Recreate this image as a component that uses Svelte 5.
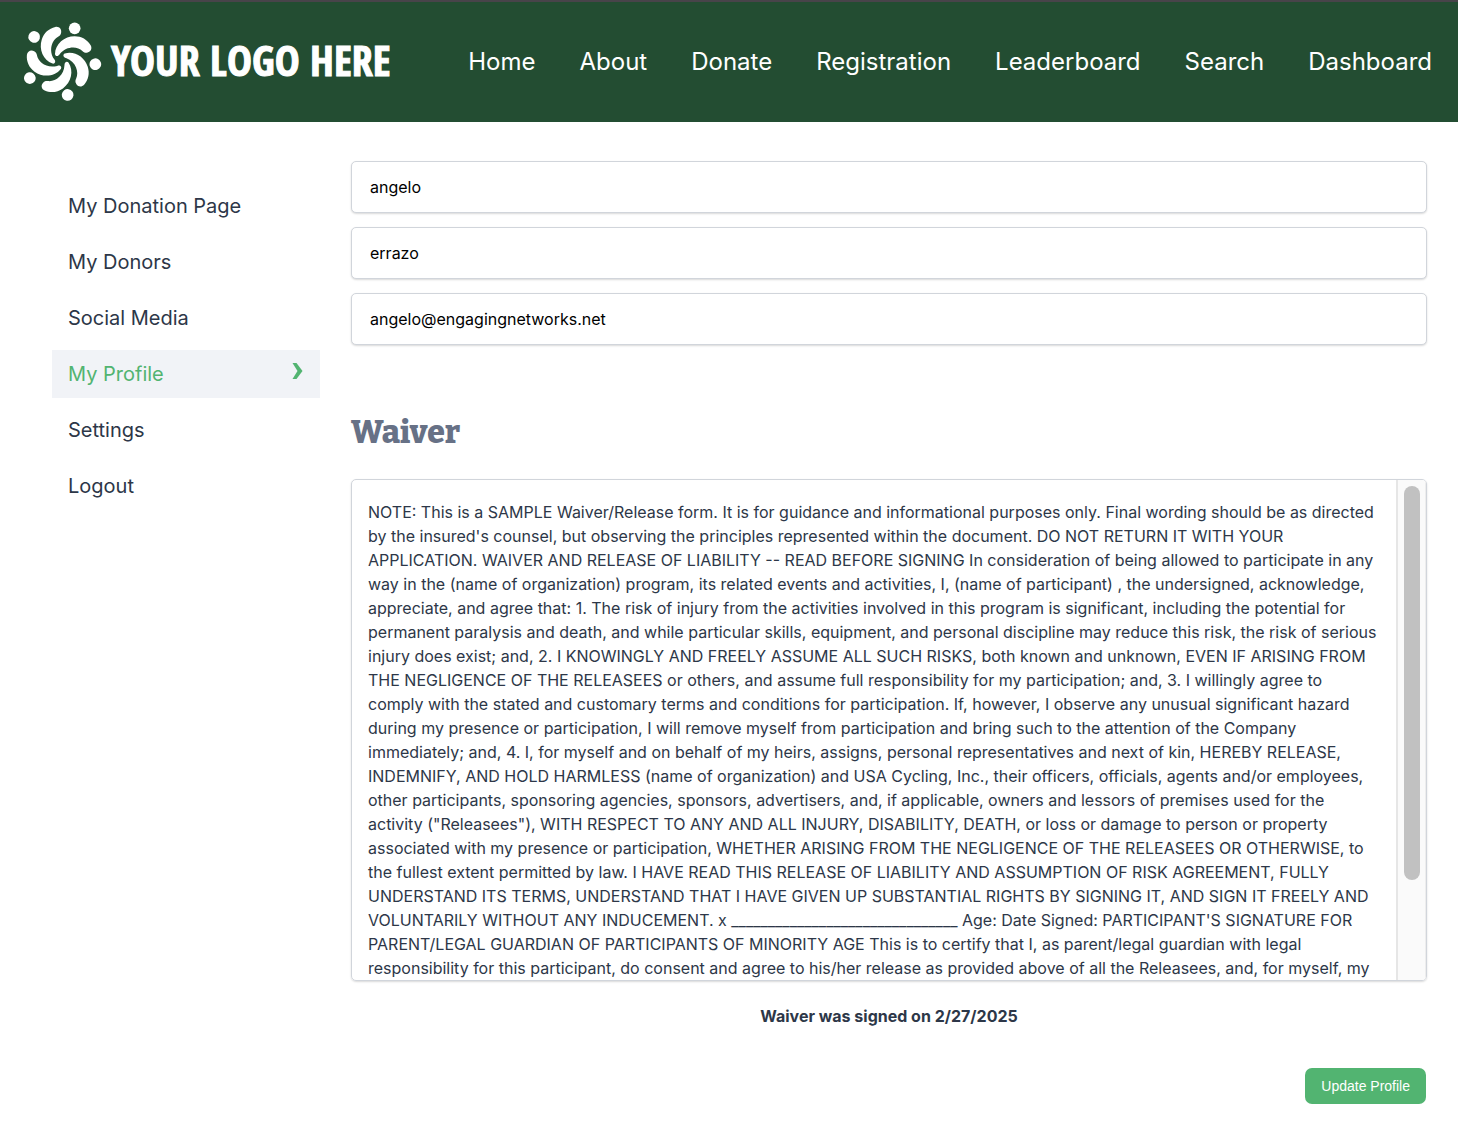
<script>
  const links = ['Home', 'About', 'Donate', 'Registration', 'Leaderboard', 'Search', 'Dashboard'];
  const menu = ['My Donation Page', 'My Donors', 'Social Media', 'My Profile', 'Settings', 'Logout'];
  const active = 'My Profile';
  const angles = [0, 72, 144, 216, 288];

  let firstName = $state('angelo');
  let lastName = $state('errazo');
  let email = $state('angelo@engagingnetworks.net');
</script>

<header>
  <a class="logo" href="#home">
    <svg viewBox="23 24 234 240" width="78" height="80" aria-hidden="true">
      {#each angles as a}
        <g transform="rotate({a} 132 139.5)">
          <circle cx="175" cy="43" r="17.5" />
          <path d="M116 120C117 90 144 67 175 67C195 67 213 77 223 94C229 105 222 115 212 116C206 117 202 115 198 111C184 97 150 95 130 121C125 129 116 127 116 120Z" />
        </g>
      {/each}
    </svg>
    <span>YOUR LOGO HERE</span>
  </a>
  <nav aria-label="Main">
    {#each links as l}
      <a href="#{l.toLowerCase()}">{l}</a>
    {/each}
  </nav>
</header>

<div class="page">
  <nav class="side" aria-label="Account">
    {#each menu as m}
      <a href="#account" class:active={m === active} aria-current={m === active ? 'page' : undefined}>
        {m}
        {#if m === active}
          <svg viewBox="0 0 11 17" width="12" height="17" aria-hidden="true"><path d="M0 0H4L10 8L4 16H0L5 8Z" /></svg>
        {/if}
      </a>
    {/each}
  </nav>

  <main>
    <form onsubmit={(e) => e.preventDefault()}>
      <div class="fields">
        <input type="text" aria-label="First name" bind:value={firstName} />
        <input type="text" aria-label="Last name" bind:value={lastName} />
        <input type="email" aria-label="Email" bind:value={email} />
      </div>

      <h2>Waiver</h2>
      <div class="waiver">
        <p class="terms">
          NOTE: This is a SAMPLE Waiver/Release form. It is for guidance and informational purposes only. Final wording should be as directed by the insured's counsel, but observing the principles represented within the document. DO NOT RETURN IT WITH YOUR APPLICATION. WAIVER AND RELEASE OF LIABILITY -- READ BEFORE SIGNING In consideration of being allowed to participate in any way in the (name of organization) program, its related events and activities, I, (name of participant) , the undersigned, acknowledge, appreciate, and agree that: 1. The risk of injury from the activities involved in this program is significant, including the potential for permanent paralysis and death, and while particular skills, equipment, and personal discipline may reduce this risk, the risk of serious injury does exist; and, 2. I KNOWINGLY AND FREELY ASSUME ALL SUCH RISKS, both known and unknown, EVEN IF ARISING FROM THE NEGLIGENCE OF THE RELEASEES or others, and assume full responsibility for my participation; and, 3. I willingly agree to comply with the stated and customary terms and conditions for participation. If, however, I observe any unusual significant hazard during my presence or participation, I will remove myself from participation and bring such to the attention of the Company immediately; and, 4. I, for myself and on behalf of my heirs, assigns, personal representatives and next of kin, HEREBY RELEASE, INDEMNIFY, AND HOLD HARMLESS (name of organization) and USA Cycling, Inc., their officers, officials, agents and/or employees, other participants, sponsoring agencies, sponsors, advertisers, and, if applicable, owners and lessors of premises used for the activity ("Releasees"), WITH RESPECT TO ANY AND ALL INJURY, DISABILITY, DEATH, or loss or damage to person or property associated with my presence or participation, WHETHER ARISING FROM THE NEGLIGENCE OF THE RELEASEES OR OTHERWISE, to the fullest extent permitted by law. I HAVE READ THIS RELEASE OF LIABILITY AND ASSUMPTION OF RISK AGREEMENT, FULLY UNDERSTAND ITS TERMS, UNDERSTAND THAT I HAVE GIVEN UP SUBSTANTIAL RIGHTS BY SIGNING IT, AND SIGN IT FREELY AND VOLUNTARILY WITHOUT ANY INDUCEMENT. x _______________________________ Age: Date Signed: PARTICIPANT'S SIGNATURE FOR PARENT/LEGAL GUARDIAN OF PARTICIPANTS OF MINORITY AGE This is to certify that I, as parent/legal guardian with legal responsibility for this participant, do consent and agree to his/her release as provided above of all the Releasees, and, for myself, my
        </p>
        <div class="track" aria-hidden="true"><div class="thumb"></div></div>
      </div>
      <p class="signed">Waiver was signed on 2/27/2025</p>
      <div class="actions">
        <button type="submit">Update Profile</button>
      </div>
    </form>
  </main>
</div>

<style>
  :global(body) {
    background: #fff;
    color: #2d3748;
    font: 16px/24px Inter, 'Liberation Sans', sans-serif;
  }
  header {
    display: flex;
    align-items: center;
    justify-content: space-between;
    box-sizing: border-box;
    min-height: 122px;
    padding: 0 26px 0 24px;
    border-top: 2px solid #48444a;
    background: #234d32;
  }
  header a {
    color: #fff;
    text-decoration: none;
  }
  .logo {
    display: flex;
    align-items: center;
    gap: 8px;
    font: 800 42px/48px 'Open Sans Condensed', 'Liberation Sans Narrow', 'DejaVu Sans Condensed', sans-serif;
    white-space: nowrap;
  }
  .logo span {
    padding: 0 0 4px 1px;
    -webkit-text-stroke: 1px #fff;
  }
  .logo svg {
    fill: #fff;
  }
  header nav {
    display: flex;
    gap: 44px;
    font-size: 24px;
    line-height: 32px;
  }
  .page {
    display: flex;
    gap: 31px;
    padding: 39px 31px 34px 52px;
  }
  .side {
    display: flex;
    flex: 0 0 268px;
    flex-direction: column;
    gap: 8px;
    padding-top: 21px;
    font-size: 20px;
  }
  .side a {
    display: flex;
    align-items: center;
    justify-content: space-between;
    padding: 12px 16px;
    color: #2d3748;
    text-decoration: none;
  }
  .side .active {
    background: #f1f3f7;
    color: #52b471;
  }
  .side svg {
    margin-bottom: 5px;
    fill: currentColor;
  }
  main {
    flex: 1;
    min-width: 0;
  }
  .fields {
    display: grid;
    gap: 14px;
  }
  input {
    box-sizing: border-box;
    width: 100%;
    height: 52px;
    padding: 0 18px;
    border: 1px solid #d1d5db;
    border-radius: 5px;
    background: #fff;
    box-shadow: 0 1px 2px rgba(0, 0, 0, 0.15);
    color: #000;
    font: inherit;
  }
  h2 {
    margin: 67px 0 27px;
    color: #677186;
    font: 800 32px/40px Bitter, 'DejaVu Serif Condensed', 'DejaVu Serif', serif;
  }
  .waiver {
    display: flex;
    overflow: hidden;
    border: 1px solid #d1d5db;
    border-radius: 5px;
    box-shadow: 0 1px 2px rgba(0, 0, 0, 0.15);
  }
  .terms {
    flex: 1;
    margin: 0;
    padding: 20px 16px 0;
  }
  .track {
    width: 16px;
    padding: 6px 5px 0 6px;
    border-left: 2px solid #e6e6e6;
    border-right: 1px solid #ededed;
    background: #fafafa;
  }
  .thumb {
    height: 394px;
    border-radius: 8px;
    background: #c1c1c1;
  }
  .signed {
    margin: 23px 0 40px;
    font-weight: 700;
    text-align: center;
  }
  .actions {
    display: flex;
    justify-content: flex-end;
    padding-right: 1px;
  }
  button {
    height: 36px;
    padding: 0 16px;
    border: 0;
    border-radius: 7px;
    background: #52b471;
    color: #fff;
    font: 14px/20px 'Liberation Sans', Arial, sans-serif;
  }
</style>
